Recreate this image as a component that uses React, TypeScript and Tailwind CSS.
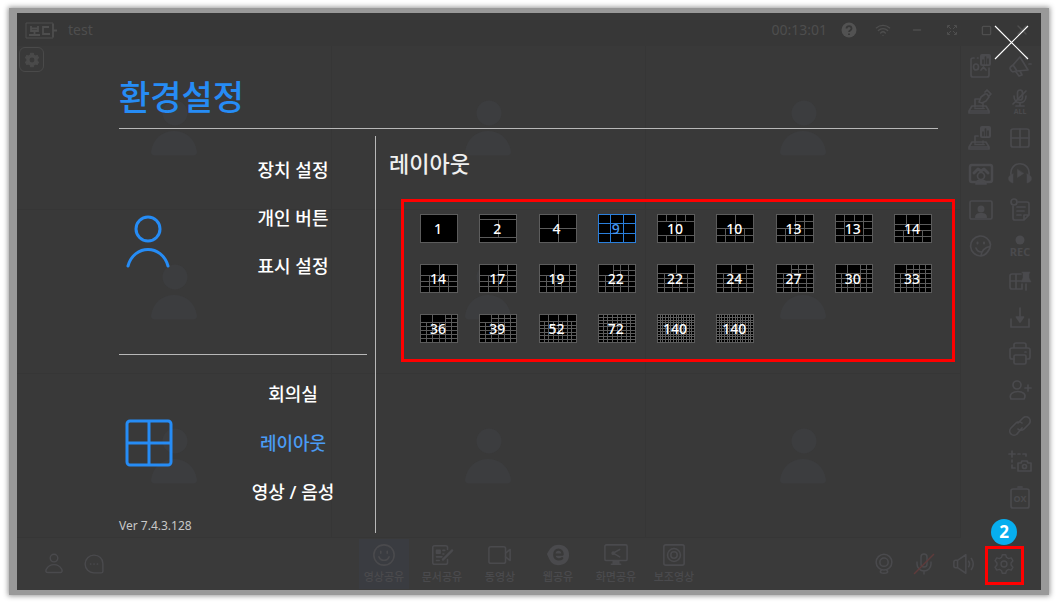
import React from "react";
import { Mic, Minus, Square, Wifi, X } from "lucide-react";

type Band = [cols: number, height: number, repeat?: number];
type Block = [x: number, y: number, w: number, h: number];

interface LayoutOption {
  id: string;
  count: number;
  bands: Band[];
  blocks?: Block[];
}

const LAYOUTS: LayoutOption[] = [
  { id: "1", count: 1, bands: [[1, 1]] },
  { id: "2", count: 2, bands: [[1, 5], [2, 18], [1, 5]] },
  { id: "4", count: 4, bands: [[2, 1, 2]] },
  { id: "9", count: 9, bands: [[3, 1, 3]] },
  { id: "10a", count: 10, bands: [[4, 1], [2, 2], [4, 1]] },
  { id: "10b", count: 10, bands: [[2, 2], [4, 1, 2]] },
  { id: "13a", count: 13, bands: [[4, 1, 4]], blocks: [[0, 0, 2, 2]] },
  { id: "13b", count: 13, bands: [[4, 1, 4]], blocks: [[1, 1, 2, 2]] },
  { id: "14a", count: 14, bands: [[3, 5], [3, 3], [4, 3, 2]] },
  { id: "14b", count: 14, bands: [[2, 2], [4, 1, 3]] },
  { id: "17", count: 17, bands: [[4, 1, 5]], blocks: [[0, 0, 2, 2]] },
  { id: "19", count: 19, bands: [[5, 1, 5]], blocks: [[0, 0, 2, 2], [2, 0, 2, 2]] },
  { id: "22a", count: 22, bands: [[5, 1, 5]], blocks: [[0, 0, 2, 2]] },
  { id: "22b", count: 22, bands: [[2, 2], [5, 1, 4]] },
  { id: "24", count: 24, bands: [[5, 1, 6]], blocks: [[0, 0, 2, 2], [2, 0, 2, 2]] },
  { id: "27", count: 27, bands: [[5, 1, 6]], blocks: [[0, 0, 2, 2]] },
  { id: "30", count: 30, bands: [[6, 1, 6]], blocks: [[0, 0, 2, 2], [2, 0, 2, 2]] },
  { id: "33", count: 33, bands: [[6, 1, 6]], blocks: [[0, 0, 2, 2]] },
  { id: "36", count: 36, bands: [[6, 1, 7]], blocks: [[0, 0, 2, 2], [2, 0, 2, 2]] },
  { id: "39", count: 39, bands: [[6, 1, 7]], blocks: [[0, 0, 2, 2]] },
  { id: "52", count: 52, bands: [[4, 2], [8, 1, 6]] },
  { id: "72", count: 72, bands: [[8, 1, 9]] },
  { id: "140a", count: 140, bands: [[14, 1, 10]] },
  { id: "140b", count: 140, bands: [[14, 1, 10]] },
];

const THUMB_W = 37;
const THUMB_H = 28;

function bandsToPath(bands: Band[]) {
  const rows = bands.flatMap(([cols, height, repeat = 1]) =>
    Array.from({ length: repeat }, () => ({ cols, height }))
  );
  const total = rows.reduce((sum, row) => sum + row.height, 0);
  let top = 0;
  let d = "";
  rows.forEach((row, i) => {
    const y1 = Math.round((top / total) * THUMB_H);
    top += row.height;
    const y2 = Math.round((top / total) * THUMB_H);
    if (i > 0) d += `M0 ${y1}H${THUMB_W}`;
    for (let c = 1; c < row.cols; c++) {
      d += `M${Math.round((c / row.cols) * THUMB_W)} ${y1}V${y2}`;
    }
  });
  return { d, cols: rows[0].cols, rows: rows.length };
}

function LayoutThumb({
  option,
  selected,
  onSelect,
}: {
  option: LayoutOption;
  selected: boolean;
  onSelect: () => void;
}) {
  const { d, cols, rows } = bandsToPath(option.bands);
  return (
    <button
      type="button"
      aria-pressed={selected}
      onClick={onSelect}
      className={`grid h-[29px] w-[38px] place-items-center ${
        selected ? "text-[#2a7fdc]" : "text-[#5c5c5c]"
      }`}
    >
      <svg
        viewBox="-0.5 -0.5 38 29"
        className="col-start-1 row-start-1 h-[29px] w-[38px]"
        fill="#000000"
        stroke="currentColor"
        aria-hidden="true"
      >
        <rect width={THUMB_W} height={THUMB_H} />
        <path d={d} fill="none" />
        {option.blocks?.map(([x, y, w, h]) => {
          const x1 = Math.round((x / cols) * THUMB_W);
          const y1 = Math.round((y / rows) * THUMB_H);
          return (
            <rect
              key={`${x}-${y}`}
              x={x1}
              y={y1}
              width={Math.round(((x + w) / cols) * THUMB_W) - x1}
              height={Math.round(((y + h) / rows) * THUMB_H) - y1}
            />
          );
        })}
      </svg>
      <span
        className={`col-start-1 row-start-1 pr-[2px] text-[14px] leading-5 font-medium ${
          selected ? "text-[#4a9cf5]" : "text-white"
        }`}
      >
        {option.count}
      </span>
    </button>
  );
}

function Icon({
  children,
  className = "size-[26px]",
}: {
  children: React.ReactNode;
  className?: string;
}) {
  return (
    <svg
      viewBox="0 0 26 26"
      className={className}
      fill="none"
      stroke="currentColor"
      strokeWidth={1.7}
      strokeLinecap="round"
      strokeLinejoin="round"
      aria-hidden="true"
    >
      {children}
    </svg>
  );
}

function ChartBadge() {
  return (
    <>
      <rect x="12" y="1" width="11" height="12" rx="2" fill="currentColor" stroke="none" />
      <path d="M15 10.500V7M17.500 10.500V4M20 10.500V6" stroke="#393939" />
    </>
  );
}

const BALLOT_BASE = <path d="M4 17h14l3 5v2H1v-2zM1 22h20M7 19.500h9" />;

const GEAR_PATH =
  "M11 2h4l1 3.300 2.300 1.300 3.300-.8 2 3.500-2.300 2.400v2.600l2.300 2.400-2 3.500-3.300-.8-2.300 1.300-1 3.300h-4l-1-3.300-2.300-1.300-3.300.8-2-3.500 2.300-2.400v-2.600L2.400 9.300l2-3.500 3.300.8L10 5.300z";

interface Tool {
  label: string;
  icon: React.ReactNode;
}

const SHARE_TOOLS: Tool[] = [
  {
    label: "OX 결과",
    icon: (
      <Icon>
        <path d="M10 5h-.5M6 5H5a2 2 0 0 0-2 2v15a2 2 0 0 0 2 2h14a2 2 0 0 0 2-2v-7" />
        <ellipse cx="8" cy="14" rx="2.500" ry="3" />
        <path d="m13 17 2.500-3 2.500 3" />
        <ChartBadge />
      </Icon>
    ),
  },
  {
    label: "투표",
    icon: (
      <Icon>
        {BALLOT_BASE}
        <path d="M7 18V10h4M15 14v4M11 13l2-5 4-3h2l2 3-3 4-4 2-3-1M17 3l2-2 4 4-2 2" />
      </Icon>
    ),
  },
  {
    label: "투표 결과",
    icon: (
      <Icon>
        {BALLOT_BASE}
        <path d="M7 18v-7h3M15 16v2" />
        <ChartBadge />
      </Icon>
    ),
  },
  {
    label: "배경",
    icon: (
      <Icon>
        <rect x="2" y="4" width="22" height="17" rx="2" strokeWidth={2.5} />
        <path d="m6 12 4-4 3 2 3-2 4 4" strokeWidth={3} />
        <circle cx="13" cy="15" r="3.500" fill="#393939" />
        <path d="M8 23c0-3 2-4 5-4s5 1 5 4z" fill="currentColor" />
      </Icon>
    ),
  },
  {
    label: "프로필",
    icon: (
      <Icon>
        <rect x="2" y="4" width="22" height="18" rx="1.500" />
        <circle cx="13" cy="12" r="3.500" fill="currentColor" stroke="none" />
        <path d="M7 21c0-4 2-5 6-5s6 1 6 5z" fill="currentColor" stroke="none" />
      </Icon>
    ),
  },
  {
    label: "스티커",
    icon: (
      <Icon>
        <path d="M13 23a10 10 0 1 1 9.500-11.500c0 5-5 11.500-9.500 11.500 0-5 4-9 9-9.500M8 15c1 3 3 4 5.500 4" />
        <path d="M9.500 9.500v1M16 9.500v1" strokeWidth={2} />
      </Icon>
    ),
  },
];

const ROOM_TOOLS: Tool[] = [
  {
    label: "공지",
    icon: (
      <Icon>
        <path d="M13 4 21 17 10 18 6 12zM6 12l-2.500 2a2 2 0 0 0 0 2.500l1 1.500a2 2 0 0 0 2.500.5l3-.5M9 19l3 4 3-1-2-4M19 6l1-2M22 11h2" />
      </Icon>
    ),
  },
  {
    label: "전체 음소거",
    icon: (
      <Icon>
        <rect x="10.500" y="1" width="5" height="10" rx="2.500" />
        <path d="M7 7c0 9 12 9 12 0M13 14v3M9 17h8M19 2 6 15" />
        <text x="13" y="25" fontSize="7" fontWeight="700" textAnchor="middle" fill="currentColor" stroke="none">
          ALL
        </text>
      </Icon>
    ),
  },
  {
    label: "화면 분할",
    icon: (
      <Icon>
        <rect x="4" y="4" width="18" height="18" rx="2" />
        <path d="M13 4v18M4 13h18" />
      </Icon>
    ),
  },
  {
    label: "미디어 듣기",
    icon: (
      <Icon>
        <path d="M4 14C2 -1 24 -1 22 14" />
        <path d="M6 13v9c-6-1-6-8 0-9zM20 13v9c6-1 6-8 0-9zM10.500 8.500v8l6-4z" fill="currentColor" strokeWidth={0.5} />
      </Icon>
    ),
  },
  {
    label: "회의록",
    icon: (
      <Icon>
        <circle cx="7" cy="5" r="3" />
        <path d="M11 5h9a2 2 0 0 1 2 2v10M6 9v12a2 2 0 0 0 2 2h9l5-5h-5v5M10 10h8M10 14h7M10 18h4" />
      </Icon>
    ),
  },
  {
    label: "녹화",
    icon: (
      <Icon>
        <circle cx="13" cy="7" r="4.500" fill="currentColor" stroke="none" />
        <text x="13" y="23" fontSize="11" fontWeight="700" textAnchor="middle" fill="currentColor" stroke="none">
          REC
        </text>
      </Icon>
    ),
  },
  {
    label: "레이아웃 고정",
    icon: (
      <Icon>
        <path d="M14 5H5a2 2 0 0 0-2 2v11a2 2 0 0 0 2 2h10v-5M9 5v15M3 12h11M19 15v6" />
        <path d="M15 3h8l-1 2v4l2 4H14l2-4V5z" fill="currentColor" strokeWidth={0.5} />
      </Icon>
    ),
  },
  {
    label: "다운로드",
    icon: (
      <Icon>
        <path d="M13 3v10M4 14v8h18v-8" />
        <path d="M9.500 12h7L13 17z" fill="currentColor" />
      </Icon>
    ),
  },
  {
    label: "인쇄",
    icon: (
      <Icon>
        <path d="M7 7V4a2 2 0 0 1 2-2h8a2 2 0 0 1 2 2v3M7 18H5a2 2 0 0 1-2-2V9a2 2 0 0 1 2-2h16a2 2 0 0 1 2 2v7a2 2 0 0 1-2 2h-2M18 11h1" />
        <rect x="7" y="14" width="12" height="9" rx="1.500" />
      </Icon>
    ),
  },
  {
    label: "초대",
    icon: (
      <Icon>
        <circle cx="10" cy="8" r="4" />
        <path d="M4 22c-5-10 19-10 13 0zM18 11h6M21 8v6" />
      </Icon>
    ),
  },
  {
    label: "링크",
    icon: (
      <Icon>
        <path d="m11 10 5-5a4.200 4.200 0 0 1 6 6l-5 5a4.200 4.200 0 0 1-6 0M15 15l-5 6a4.200 4.200 0 0 1-6-6l5-5a4.200 4.200 0 0 1 6 0" />
      </Icon>
    ),
  },
  {
    label: "화면 캡처",
    icon: (
      <Icon>
        <path d="M2 5h6M5 2v6M11 5h2M16 5h3v2M5 11v2M5 16v3h3" />
        <path d="M11 14h3l1-2h5l1 2h3v8H11z" />
        <circle cx="17.500" cy="17.500" r="2" />
      </Icon>
    ),
  },
  {
    label: "OX 퀴즈",
    icon: (
      <Icon>
        <path d="M9 4H6a2 2 0 0 0-2 2v15a2 2 0 0 0 2 2h14a2 2 0 0 0 2-2V6a2 2 0 0 0-2-2h-3M9 4h8M11 2h4" />
        <text x="13" y="17" fontSize="9" fontWeight="700" textAnchor="middle" fill="currentColor" stroke="none">
          OX
        </text>
      </Icon>
    ),
  },
];

const SHARE_MODES: Tool[] = [
  {
    label: "영상공유",
    icon: (
      <Icon className="size-6">
        <circle cx="13" cy="13" r="11" />
        <path d="M7.500 15c2 5 9 5 11 0M9.500 9v2M16.500 9v2" />
      </Icon>
    ),
  },
  {
    label: "문서공유",
    icon: (
      <Icon className="size-6">
        <path d="M19 7V5a2 2 0 0 0-2-2H5a2 2 0 0 0-2 2v16a2 2 0 0 0 2 2h12a2 2 0 0 0 2-2v-3M7 15h6M7 19h3M14 8h2M14 12h1" />
        <path d="M14 18 24 8" strokeWidth={2.5} />
        <path d="M7 8h4v3H7z" fill="currentColor" />
      </Icon>
    ),
  },
  {
    label: "동영상",
    icon: (
      <Icon className="size-6">
        <rect x="1" y="4" width="18" height="18" rx="2" />
        <path d="m19 11 5-4v12l-5-4" />
      </Icon>
    ),
  },
  {
    label: "웹공유",
    icon: (
      <Icon className="size-6">
        <path d="M14 2C6 2 4 7 1 12c3 7 5 12 12 12s12-4 12-11S20 2 14 2z" fill="currentColor" stroke="none" />
        <path d="M9 12.500h9c0-7-9-7-9 0 0 6 6 6 8.500 4" stroke="#393939" strokeWidth={2.5} />
      </Icon>
    ),
  },
  {
    label: "화면공유",
    icon: (
      <Icon className="size-6">
        <rect x="1" y="2" width="24" height="17" rx="1.500" />
        <path d="m17 7-7 4 7 4" />
        <path d="M10 20h6v3h-6zM8 23h10" fill="currentColor" />
        <circle cx="10" cy="11" r="1.200" fill="currentColor" />
      </Icon>
    ),
  },
  {
    label: "보조영상",
    icon: (
      <Icon className="size-6">
        <rect x="2" y="2" width="22" height="22" rx="2" />
        <circle cx="13" cy="13" r="7" />
        <circle cx="13" cy="13" r="3.500" />
      </Icon>
    ),
  },
];

function Silhouette() {
  return (
    <svg viewBox="0 0 46 56" className="h-[56px] w-[46px]" fill="#3c3d3f" aria-hidden="true">
      <circle cx="24" cy="13" r="12.500" />
      <path d="M4 55.500q-4 0-4-4C2 39 11 31 23 31s21 8 23 20.500q0 4-4 4z" />
    </svg>
  );
}

function ToolColumn({ tools }: { tools: Tool[] }) {
  return (
    <div className="flex flex-1 flex-col">
      {tools.map((tool) => (
        <button
          key={tool.label}
          type="button"
          aria-label={tool.label}
          className="flex h-9 items-center justify-center"
        >
          {tool.icon}
        </button>
      ))}
    </div>
  );
}

function WindowHeader() {
  return (
    <header className="flex h-[33px] items-center bg-[#373737] pt-px pl-2 text-[#4e4e4e]">
      <svg viewBox="0 0 32 17" className="h-[17px] w-8" fill="none" stroke="currentColor" aria-hidden="true">
        <path d="M28 4V1H1v15h27v-3" />
        <path d="M6 4v5h7V4M6 6.500h7M9.500 9v4M4 13h11M24 5h-6v7h7M28 2v13M28 8.500h4" strokeWidth={1.8} />
      </svg>
      <span className="ml-[11px] text-[14px] leading-5">test</span>
      <time className="ml-auto text-[14px] leading-5">00:13:01</time>
      <button type="button" aria-label="도움말" className="ml-[14px]">
        <svg viewBox="0 0 16 16" className="size-4" fill="none" aria-hidden="true">
          <circle cx="8" cy="8" r="7.500" fill="#525252" />
          <path d="M5.500 6.500c0-3.300 5-3.300 5 0 0 2-2.500 1.800-2.500 3.500M8 11.500v1.500" stroke="#373737" strokeWidth="1.800" />
        </svg>
      </button>
      <button type="button" aria-label="네트워크" className="ml-[18px]">
        <Wifi className="size-4" />
      </button>
      <button type="button" aria-label="최소화" className="ml-5">
        <Minus className="size-3" strokeWidth={3} />
      </button>
      <button type="button" aria-label="전체 화면" className="ml-[23px]">
        <svg viewBox="0 0 12 12" className="size-3" fill="none" stroke="currentColor" aria-hidden="true">
          <path d="M4 1.500H1.500V4M8 1.500h2.500V4M4 10.500H1.500V8M8 10.500h2.500V8M2 2l3 3M10 2 7 5M2 10l3-3M10 10 7 7" />
        </svg>
      </button>
      <button type="button" aria-label="최대화" className="ml-[23px]">
        <Square className="size-[11px]" strokeWidth={3} />
      </button>
      <button type="button" aria-label="닫기" className="mr-[11px] ml-[22px]">
        <X className="size-4" strokeWidth={2} />
      </button>
    </header>
  );
}

function WindowFooter() {
  return (
    <footer className="flex h-[52px] items-center bg-[#3a3a3a] px-[17px] text-[#4a4a4d]">
      <div className="flex flex-1">
        <button type="button" aria-label="참가자" className="flex w-10 justify-center">
          <Icon className="size-[22px]">
            <circle cx="13" cy="6" r="4.500" />
            <path d="M6 23c-3 0-3-2-2-4 4-7 14-7 18 0 1 2 1 4-2 4z" />
          </Icon>
        </button>
        <button type="button" aria-label="채팅" className="flex w-10 justify-center">
          <Icon className="size-[22px]">
            <path d="M13 2.500c6 0 10.500 4.500 10.500 10v9a2 2 0 0 1-2 2H13a10.500 10.500 0 1 1 0-21z" />
            <path d="M9 13h.1M13 13h.1M17 13h.1" strokeWidth={2} />
          </Icon>
        </button>
      </div>
      <div className="flex gap-2">
        {SHARE_MODES.map((mode, i) => (
          <button
            key={mode.label}
            type="button"
            className={`flex h-[50px] w-[50px] flex-col items-center gap-px pt-1 ${
              i === 0 ? "bg-[#3a3c41]" : ""
            }`}
          >
            {mode.icon}
            <span className="text-[11px] leading-[18px] font-medium whitespace-nowrap">
              {mode.label}
            </span>
          </button>
        ))}
      </div>
      <div className="flex flex-1 items-center justify-end">
        <button type="button" aria-label="카메라" className="flex w-10 justify-center">
          <Icon className="size-6">
            <circle cx="13" cy="11" r="8.500" />
            <circle cx="13" cy="11" r="4.500" />
            <path d="M10 20c-5 4 11 4 6 0" />
          </Icon>
        </button>
        <button type="button" aria-label="마이크" className="flex w-10 justify-center">
          <span className="relative">
            <Mic className="size-6" strokeWidth={1.5} />
            <svg viewBox="0 0 24 24" className="absolute inset-0 size-6" stroke="#5e3b3b" strokeWidth="1.500" aria-hidden="true">
              <path d="M2 22 22 2" />
            </svg>
          </span>
        </button>
        <button type="button" aria-label="스피커" className="flex w-10 justify-center">
          <Icon className="size-6">
            <path d="M6 9 15 3v20l-9-6H4a2 2 0 0 1-2-2v-4a2 2 0 0 1 2-2zM6 9v8M18 10q2 3 0 6M21 7q4 6 0 12" />
          </Icon>
        </button>
        <button
          type="button"
          aria-label="환경설정"
          className="relative flex size-10 items-center justify-center"
        >
          <Icon className="size-[22px]">
            <path d={GEAR_PATH} />
            <circle cx="13" cy="13" r="3.500" />
          </Icon>
          <span className="absolute top-[2px] left-px size-[39px] border-3 border-[#ff0000]" />
          <span className="absolute -top-[25px] left-[7px] flex size-[26px] items-center justify-center rounded-full bg-[#07aeef] text-[17px] leading-6 font-bold text-white">
            2
          </span>
        </button>
      </div>
    </footer>
  );
}

function Conference() {
  return (
    <div className="flex flex-1 flex-col">
      <WindowHeader />
      <div className="flex flex-1">
        <div className="grid flex-1 grid-cols-3 grid-rows-3">
          {Array.from({ length: 9 }, (_, i) => (
            <div
              key={i}
              className="grid place-items-center border-r border-b border-[#363636]"
            >
              {i === 0 && (
                <button
                  type="button"
                  aria-label="영상 설정"
                  className="col-start-1 row-start-1 mt-px ml-[2px] flex size-[25px] items-center justify-center self-start justify-self-start rounded-md border border-[#4a4a4a] text-[#4a4a4a]"
                >
                  <Icon className="size-4">
                    <path d={GEAR_PATH} fill="currentColor" />
                    <circle cx="13" cy="13" r="4" fill="#393939" stroke="none" />
                  </Icon>
                </button>
              )}
              <div className="col-start-1 row-start-1">
                <Silhouette />
              </div>
            </div>
          ))}
        </div>
        <aside className="flex w-20 bg-[#3a3a3a] pt-[2px] pr-px text-[#4a4a4d]">
          <ToolColumn tools={SHARE_TOOLS} />
          <ToolColumn tools={ROOM_TOOLS} />
        </aside>
      </div>
      <WindowFooter />
    </div>
  );
}

function MenuList({
  items,
  active,
  itemClass,
}: {
  items: string[];
  active?: string;
  itemClass: string;
}) {
  return (
    <ul className="ml-auto w-[148px]">
      {items.map((item) => (
        <li key={item} className={`flex items-center justify-center ${itemClass}`}>
          <button
            type="button"
            className={`text-[18px] leading-6 font-medium ${
              item === active ? "text-[#4a9cf5]" : "text-white"
            }`}
          >
            {item}
          </button>
        </li>
      ))}
    </ul>
  );
}

function SettingsDialog() {
  const [selected, setSelected] = React.useState("9");

  return (
    <section
      role="dialog"
      aria-label="환경설정"
      className="pointer-events-none absolute inset-x-0 top-0 bottom-[57px] flex flex-col pl-[102px] *:pointer-events-auto"
    >
      <div className="mr-[103px] flex h-[116px] shrink-0 items-end border-b border-[#b8b8b8] pb-[7px]">
        <h1 className="text-[34px] leading-[48px] font-medium text-[#268cf5]">환경설정</h1>
      </div>
      <button type="button" aria-label="설정 닫기" className="absolute top-3 right-3">
        <svg viewBox="0 0 35 35" className="size-[35px]" stroke="#ffffff" strokeWidth="1.200" aria-hidden="true">
          <path d="m1 1 33 33M34 1 1 34" />
        </svg>
      </button>

      <div className="mt-[7px] flex flex-1">
        <nav className="flex w-[257px] flex-col border-r border-[#b8b8b8] pr-2">
          <div className="flex h-[219px] shrink-0 border-b border-[#b8b8b8] pt-[10px]">
            <svg
              viewBox="0 0 46 54"
              className="mt-[69px] ml-[6px] h-[54px] w-[46px]"
              fill="none"
              stroke="#268cf5"
              strokeWidth="3"
              strokeLinecap="round"
              aria-hidden="true"
            >
              <circle cx="23" cy="14" r="12" />
              <path d="M3 51C9 29 37 29 43 51" />
            </svg>
            <MenuList items={["장치 설정", "개인 버튼", "표시 설정"]} itemClass="h-12" />
          </div>
          <div className="flex items-center pt-[14px]">
            <svg
              viewBox="0 0 48 48"
              className="ml-[6px] size-12"
              fill="none"
              stroke="#268cf5"
              strokeWidth="3"
              aria-hidden="true"
            >
              <rect x="2" y="2" width="44" height="44" rx="3" />
              <path d="M24 2v44M2 24h44" />
            </svg>
            <MenuList
              items={["회의실", "레이아웃", "영상 / 음성"]}
              active="레이아웃"
              itemClass="h-[49px]"
            />
          </div>
          <p className="mt-[3px] text-[12px] leading-[14px] text-[#c8c8c8]">Ver 7.4.3.128</p>
        </nav>

        <div className="flex-1 pr-[86px]">
          <h2 className="pl-[13px] text-[22px] leading-[54px] font-medium text-[#f0f0f0]">
            레이아웃
          </h2>
          <div className="mt-[9px] ml-[25px] grid grid-cols-[repeat(9,38px)] justify-between gap-y-[21px] border-3 border-[#ff0000] pt-3 pr-5 pb-4 pl-4">
            {LAYOUTS.map((option) => (
              <LayoutThumb
                key={option.id}
                option={option}
                selected={option.id === selected}
                onSelect={() => setSelected(option.id)}
              />
            ))}
          </div>
        </div>
      </div>
    </section>
  );
}

export default function App() {
  return (
    <div className="flex min-h-screen bg-white px-[9px] py-2 font-['Noto_Sans','Noto_Sans_CJK_KR',sans-serif]">
      <div className="flex flex-1 bg-[#999999] px-2 py-[5px] shadow-[0_0_5px_1px_#999999]">
        <main className="relative flex flex-1 flex-col bg-[#393939]">
          <Conference />
          <SettingsDialog />
        </main>
      </div>
    </div>
  );
}
